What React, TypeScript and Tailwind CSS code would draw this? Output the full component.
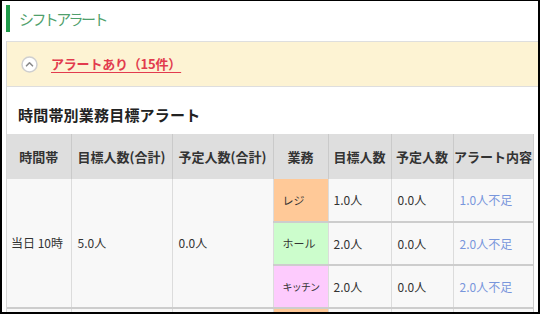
import React from "react";

const font = { fontFamily: '"Noto Sans CJK JP", "Noto Sans", sans-serif' };

type Sub = { name: string; bg: string; target: string; plan: string; alert: string; nameCls: string };

const subs: Sub[] = [
  { name: "レジ", bg: "bg-[#ffc998]", target: "1.0人", plan: "0.0人", alert: "1.0人不足", nameCls: "text-[11px]" },
  { name: "ホール", bg: "bg-[#ccfdcc]", target: "2.0人", plan: "0.0人", alert: "2.0人不足", nameCls: "text-[11px]" },
  { name: "キッチン", bg: "bg-[#fdcbfd]", target: "2.0人", plan: "0.0人", alert: "2.0人不足", nameCls: "text-[10px] tracking-[-0.8px]" },
];

const cell = "border-r border-b-2 border-r-[#dcdcdc] border-b-[#cdcdcd]";

function Group({ time, target, plan }: { time: string; target: string; plan: string }) {
  return (
    <>
      {subs.map((s, i) => (
        <tr key={s.name} className="h-[43px]">
          {i === 0 && (
            <>
              <td rowSpan={3} className={`${cell} pl-[4px] text-[12px] text-[#333]`}>
                {time}
              </td>
              <td rowSpan={3} className={`${cell} pl-[6px] text-[12px] text-[#333]`}>
                {target}
              </td>
              <td rowSpan={3} className={`${cell} pl-[6px] text-[12px] text-[#333]`}>
                {plan}
              </td>
            </>
          )}
          <td className={`${s.bg} ${cell} pl-[9px] ${s.nameCls} text-[#333] whitespace-nowrap`}>{s.name}</td>
          <td className={`${cell} pl-[5px] text-[12px] text-[#333]`}>{s.target}</td>
          <td className={`${cell} pl-[6px] text-[12px] text-[#333]`}>{s.plan}</td>
          <td className="border-r border-b-2 border-r-[#cdcdcd] border-b-[#cdcdcd] pl-[6px] text-[12px] text-[#7896dc]">
            {s.alert}
          </td>
        </tr>
      ))}
    </>
  );
}

export default function App() {
  return (
    <div
      style={font}
      className="w-[540px] h-[314px] overflow-hidden bg-white border-black border-l-2 border-t border-r-2 border-b-2 box-border"
    >
      <div className="flex items-center ml-[4px] mt-[4px] h-[27px]">
        <div className="w-[4px] h-[27px] bg-[#1f9a4a]" />
        <div className="ml-[9px] text-[15px] tracking-[-2.6px] text-[#4f9f6c] leading-none">シフトアラート</div>
      </div>

      <div className="ml-[4px] mt-[9px] border-l border-[#d8d8d8] h-[400px]">
        <div className="h-[46px] bg-[#fdf3d3] border-t border-b border-[#dedede] flex items-center pl-[14px]">
          <svg width="17" height="17" viewBox="0 0 17 17">
            <circle cx="8.5" cy="8.5" r="7.5" fill="#ffffff" stroke="#cfcfcf" strokeWidth="1.5" />
            <path d="M5.5 9.8 L8.5 6.8 L11.5 9.8" fill="none" stroke="#8a8a8a" strokeWidth="1.6" strokeLinecap="round" strokeLinejoin="round" />
          </svg>
          <span className="ml-[13px] text-[13px] font-bold text-[#e23b4e] underline underline-offset-[3px] tracking-[-0.2px]">
            アラートあり（15件）
          </span>
        </div>

        <div className="pl-[11px] mt-[18px] text-[15px] font-bold text-[#222] leading-[20px] tracking-[0.2px]">
          時間帯別業務目標アラート
        </div>

        <table className="mt-[9px] w-[526px] table-fixed border-collapse bg-[#f8f8f8]">
          <colgroup>
            <col className="w-[64px]" />
            <col className="w-[101px]" />
            <col className="w-[101px]" />
            <col className="w-[55px]" />
            <col className="w-[63px]" />
            <col className="w-[62px]" />
            <col className="w-[80px]" />
          </colgroup>
          <thead>
            <tr className="h-[45px] bg-[#dedede]">
              {["時間帯", "目標人数(合計)", "予定人数(合計)", "業務", "目標人数", "予定人数", "アラート内容"].map((h, i) => (
                <th
                  key={h}
                  className={`text-[13px] font-bold text-[#333] text-center whitespace-nowrap border-r ${i === 6 ? "border-[#cdcdcd]" : "border-[#cacaca]"}`}
                >
                  {h}
                </th>
              ))}
            </tr>
          </thead>
          <tbody>
            <Group time="当日 10時" target="5.0人" plan="0.0人" />
            <tr className="h-[43px]">
              <td className={cell} />
              <td className={cell} />
              <td className={cell} />
              <td className={`bg-[#ffc998] ${cell}`} />
              <td className={cell} />
              <td className={cell} />
              <td className="border-r border-b-2 border-r-[#cdcdcd] border-b-[#cdcdcd]" />
            </tr>
          </tbody>
        </table>
      </div>
    </div>
  );
}
